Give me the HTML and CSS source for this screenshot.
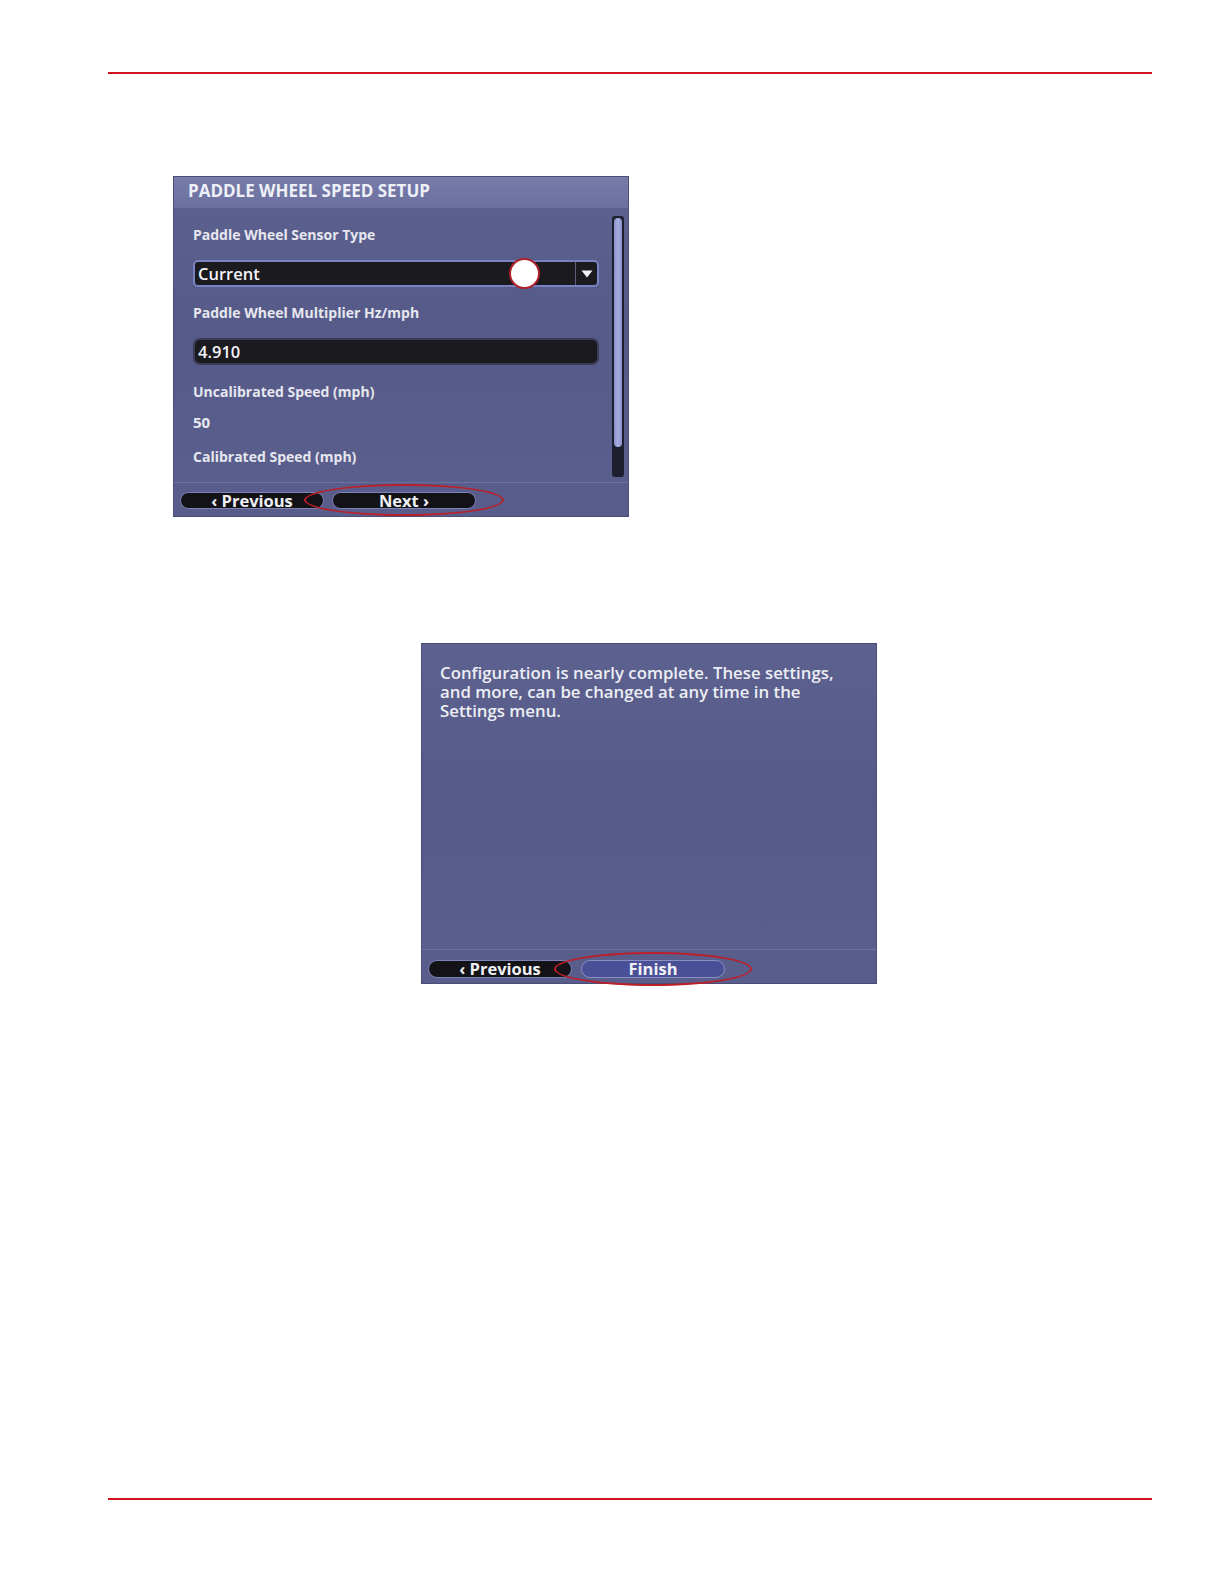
FILE: index.html
```html
<!DOCTYPE html>
<html>
<head>
<meta charset="utf-8">
<link rel="stylesheet" href="styles.css">
</head>
<body>
<div class="page">
  <div class="rule top"></div>
  <div class="fig fig1">
    <div class="screen s1">
      <div class="hdr">PADDLE WHEEL SPEED SETUP</div>
      <div class="body">
        <div class="fields">
          <div class="lbl l1">Paddle Wheel Sensor Type</div>
          <div class="box select">
            <span class="val">Current</span>
            <span class="arrow"><svg width="12" height="8" viewBox="0 0 12 8"><path d="M0.5 0.5 L11.5 0.5 L6 7.5 Z" fill="#f2f2f6"/></svg></span>
            <span class="callout"></span>
          </div>
          <div class="lbl l2">Paddle Wheel Multiplier Hz/mph</div>
          <div class="box input"><span class="val">4.910</span></div>
          <div class="lbl l3">Uncalibrated Speed (mph)</div>
          <div class="num">50</div>
          <div class="lbl l4">Calibrated Speed (mph)</div>
        </div>
        <div class="scroll"><div class="thumb"></div></div>
      </div>
      <div class="foot">
        <div class="btn">&lsaquo; Previous</div>
        <div class="btn">Next &rsaquo;<span class="ring"></span></div>
      </div>
    </div>
  </div>
  <div class="fig fig2">
    <div class="screen s2">
      <div class="msg">
        <div class="line">Configuration is nearly complete. These settings,</div>
        <div class="line">and more, can be changed at any time in the</div>
        <div class="line">Settings menu.</div>
      </div>
      <div class="foot foot2">
        <div class="btn">&lsaquo; Previous</div>
        <div class="btn sel">Finish<span class="ring ring2"></span></div>
      </div>
    </div>
  </div>
  <div class="spacer"></div>
  <div class="rule bottom"></div>
</div>
</body>
</html>
```
FILE: styles.css
```css
html, body {
  margin: 0;
  padding: 0;
  background: #ffffff;
}
.page {
  width: 1224px;
  height: 1584px;
  padding-top: 72px;
  box-sizing: border-box;
  display: flex;
  flex-direction: column;
}
.rule {
  margin-left: 108px;
  width: 1044px;
  height: 2px;
  flex: none;
  background: #d4121b;
}
.fig {
  display: flex;
  flex: none;
}
.fig1 {
  margin-top: 102px;
  padding-left: 173px;
}
.fig2 {
  margin-top: 126px;
  padding-left: 421px;
}
.spacer {
  flex: 1;
}
.bottom {
  margin-bottom: 84px;
}
.screen {
  width: 456px;
  height: 341px;
  background: linear-gradient(180deg, #5d618f 0%, #565a88 45%, #5b5f8d 100%);
  box-sizing: border-box;
  border: 1px solid #4b4e74;
  display: flex;
  flex-direction: column;
  font-family: "Open Sans", "DejaVu Sans", sans-serif;
  font-weight: 700;
  color: #ebecf3;
}
.hdr {
  height: 31px;
  flex: none;
  background: linear-gradient(180deg, #777ba8 0%, #6c70a0 100%);
  padding-left: 14px;
  padding-top: 4px;
  box-sizing: border-box;
  font-size: 17px;
  line-height: 20px;
  font-weight: 700;
  color: #eef0f7;
}
.body {
  height: 274px;
  flex: none;
  display: flex;
  box-sizing: border-box;
  padding: 0 4px 0 19px;
}
.fields {
  width: 406px;
  margin-right: 13px;
}
.lbl {
  font-size: 14px;
  line-height: 18px;
  color: #e6e7ef;
}
.l1 { margin-top: 18px; }
.l2 { margin-top: 17px; }
.l3 { margin-top: 18px; }
.l4 { margin-top: 17px; }
.box {
  height: 27px;
  margin-top: 16px;
  background: #1a1a1f;
  border: 2px solid #7a82c4;
  border-radius: 5px;
  box-sizing: border-box;
  display: flex;
  align-items: center;
  position: relative;
}
.input {
  border-color: #3b3d58;
  border-radius: 7px;
}
.val {
  flex: 1;
  padding-left: 3px;
  font-size: 16.5px;
  font-weight: 600;
  color: #f4f4f8;
}
.arrow {
  width: 22px;
  height: 100%;
  box-sizing: border-box;
  border-left: 1px solid #5c5f82;
  display: flex;
  align-items: center;
  justify-content: center;
}
.callout {
  position: absolute;
  left: 314px;
  top: -4px;
  width: 31px;
  height: 31px;
  border-radius: 50%;
  background: #ffffff;
  border: 2.5px solid #ae2129;
  box-sizing: border-box;
}
.num {
  margin-top: 12px;
  font-size: 15px;
  line-height: 18px;
  color: #e8e9f0;
}
.scroll {
  width: 12px;
  height: 261px;
  margin-top: 8px;
  background: #1e1f2e;
  border-radius: 3px;
  padding: 2px 2px 0 2px;
  box-sizing: border-box;
}
.thumb {
  height: 229px;
  background: linear-gradient(90deg, #8a90cb, #a8aee0, #8a90cb);
  border-radius: 5px;
}
.foot {
  height: 34px;
  flex: none;
  display: flex;
  gap: 8px;
  padding-left: 6px;
  padding-top: 9px;
  box-sizing: border-box;
  border-top: 1px solid #6d71a0;
  background: #595d8b;
}
.btn {
  width: 144px;
  height: 17px;
  background: #131317;
  border: 1px solid #7d83b7;
  border-radius: 9px;
  box-sizing: border-box;
  font-size: 16.5px;
  line-height: 15px;
  color: #eff0f6;
  text-align: center;
  position: relative;
  white-space: nowrap;
}
.ring {
  position: absolute;
  left: -29px;
  top: -9px;
  width: 200px;
  height: 32px;
  border: 2px solid #bd1f29;
  border-radius: 50%;
  box-sizing: border-box;
}
.msg {
  flex: 1;
  padding: 19px 0 0 18px;
  font-size: 16.8px;
  font-weight: 600;
  color: #eceef4;
}
.line {
  height: 19px;
  line-height: 19px;
}
.foot2 {
  gap: 9px;
  padding-top: 10px;
  height: 34px;
}
.foot2 .btn {
  height: 18px;
  line-height: 16px;
}
.btn.sel {
  background: #4a5096;
  border-color: #8a90c6;
}
.ring2 {
  left: -28px;
  top: -9px;
  width: 198px;
  height: 34px;
}
```
